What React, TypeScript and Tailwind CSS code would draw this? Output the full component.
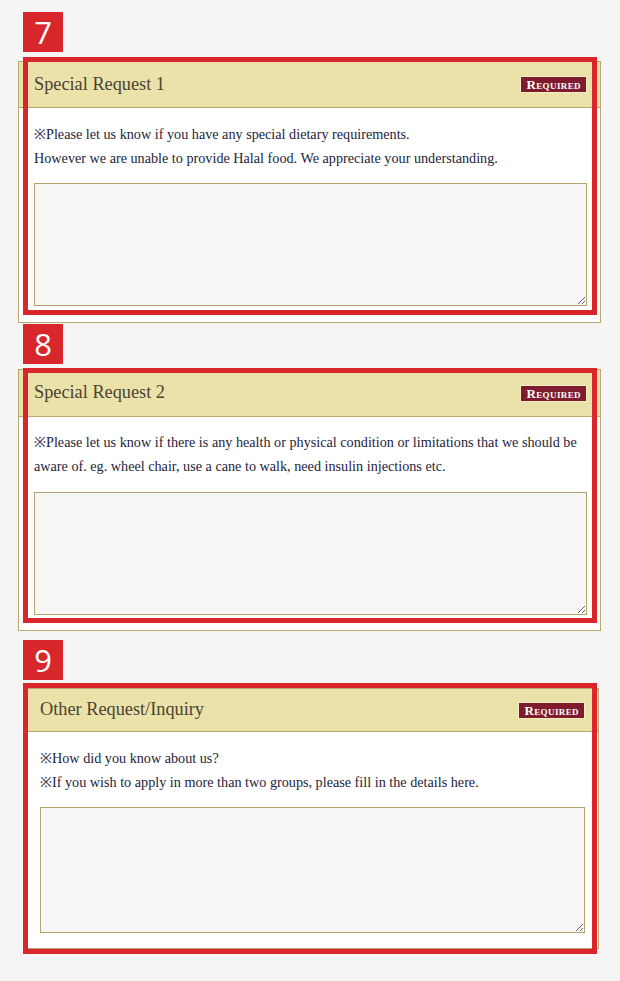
import React from "react";

const serif = { fontFamily: '"Liberation Serif", "DejaVu Serif", serif' };

const StepBadge = ({ n, className = "" }: { n: string; className?: string }) => (
  <div
    className={`flex h-10 w-10 items-center justify-center bg-[#d8272b] text-[31px] leading-none text-white ${className}`}
    style={{ fontFamily: '"Open Sans", "Liberation Sans", sans-serif' }}
  >
    {n}
  </div>
);

const Required = () => (
  <span
    className="flex h-[17px] items-center border border-[#f6efc4] bg-[#7e1b2c] px-[5px] text-[13px] font-bold leading-none tracking-[0.4px] text-white [font-variant:small-caps]"
    style={serif}
  >
    Required
  </span>
);

type CardProps = {
  title: string;
  lines: string[];
  headerH: string;
  padX: string;
  bodyTop: string;
  areaTop: string;
  areaH: string;
  bodyBottom: string;
};

const Card = ({ title, lines, headerH, padX, bodyTop, areaTop, areaH, bodyBottom }: CardProps) => (
  <>
    <div className={`flex items-center justify-between border-b border-[#b9a86f] bg-[#ebe2a9] ${headerH} ${padX}`}>
      <h2 className="text-[18.3px] text-[#4a4332]" style={serif}>
        {title}
      </h2>
      <Required />
    </div>
    <div className={`${padX} ${bodyTop} ${bodyBottom}`}>
      {lines.map((l) => (
        <p key={l} className="text-[14.2px] leading-[24px] text-[#24243a]" style={serif}>
          {l}
        </p>
      ))}
      <textarea
        className={`block w-full resize-y border border-[#b3a46d] bg-[#f6f6f6] outline-none ${areaTop} ${areaH}`}
      />
    </div>
  </>
);

export default function App() {
  return (
    <div className="min-h-[981px] w-[620px] bg-[#f5f5f5] pt-3">
      <StepBadge n="7" className="ml-[23px]" />
      <div className="relative ml-[18px] mt-[9px] w-[583px] border border-[#b9a86f] bg-white">
        <Card
          title="Special Request 1"
          lines={[
            "※Please let us know if you have any special dietary requirements.",
            "However we are unable to provide Halal food. We appreciate your understanding.",
          ]}
          headerH="h-[46px]"
          padX="pl-[15px] pr-[13px]"
          bodyTop="pt-[14px]"
          areaTop="mt-[13px]"
          areaH="h-[123px]"
          bodyBottom="pb-[16px]"
        />
        <div className="pointer-events-none absolute bottom-[7px] left-[4px] right-[3px] top-[-5px] border-[5px] border-[#d9262b]" />
      </div>

      <StepBadge n="8" className="ml-[23px] mt-px" />
      <div className="relative ml-[18px] mt-[5px] w-[583px] border border-[#b9a86f] bg-white">
        <Card
          title="Special Request 2"
          lines={[
            "※Please let us know if there is any health or physical condition or limitations that we should be aware of. eg. wheel chair, use a cane to walk, need insulin injections etc.",
          ]}
          headerH="h-[47px]"
          padX="pl-[15px] pr-[13px]"
          bodyTop="pt-[13px]"
          areaTop="mt-[14px]"
          areaH="h-[123px]"
          bodyBottom="pb-[15px]"
        />
        <div className="pointer-events-none absolute bottom-[7px] left-[4px] right-[3px] top-[-2px] border-[5px] border-[#d9262b]" />
      </div>

      <StepBadge n="9" className="ml-[23px] mt-[9px]" />
      <div className="relative ml-[27px] mt-[8px] w-[572px] border border-[#b9a86f] bg-white">
        <Card
          title="Other Request/Inquiry"
          lines={[
            "※How did you know about us?",
            "※If you wish to apply in more than two groups, please fill in the details here.",
          ]}
          headerH="h-[43px]"
          padX="pl-[12px] pr-[13px]"
          bodyTop="pt-[14px]"
          areaTop="mt-[13px]"
          areaH="h-[126px]"
          bodyBottom="pb-[15px]"
        />
        <div className="pointer-events-none absolute bottom-[-6px] left-[-5px] right-[1px] top-[-6px] border-[5px] border-[#d9262b]" />
      </div>
    </div>
  );
}
